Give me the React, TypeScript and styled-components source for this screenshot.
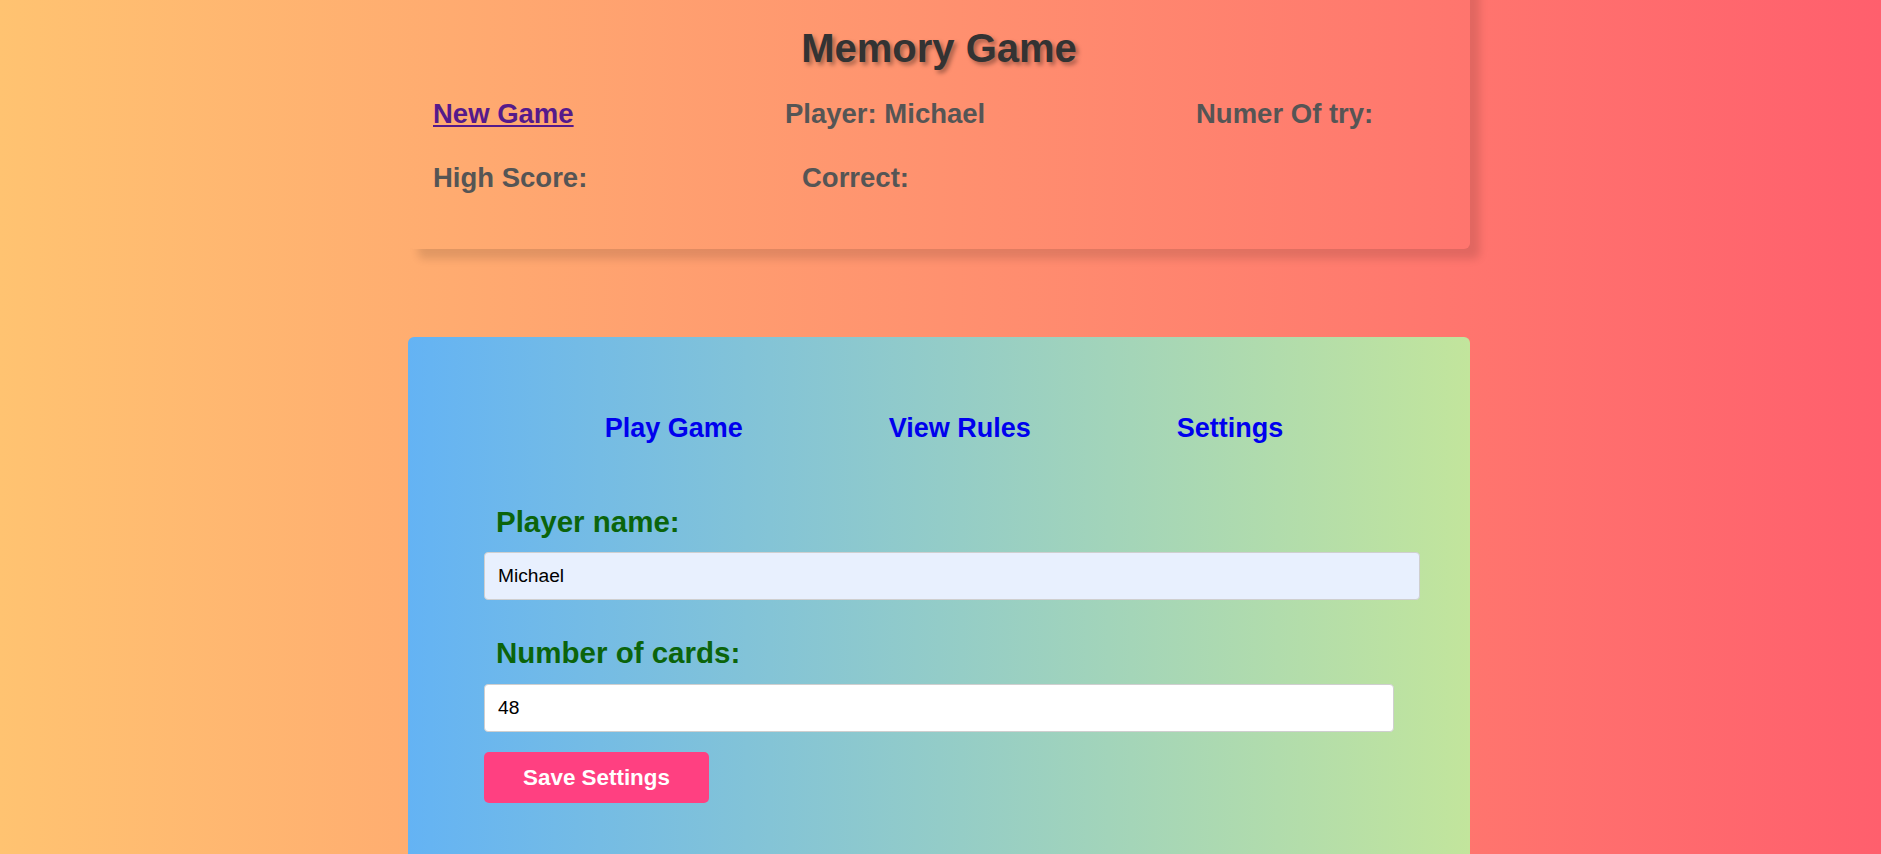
import React from "react";
import styled, { createGlobalStyle } from "styled-components";

const GlobalStyle = createGlobalStyle`
  html, body {
    margin: 0;
    padding: 0;
    min-height: 100%;
  }
  body {
    background: linear-gradient(to right, #ffc371, #ff5f6d);
    font-family: "Liberation Sans", Arial, sans-serif;
    min-height: 100vh;
    overflow-x: hidden;
  }
`;

const Page = styled.div`
  display: flex;
  flex-direction: column;
  align-items: center;
  padding: 0 3px 40px 0;
`;

const HeaderCard = styled.header`
  width: 1062px;
  box-sizing: border-box;
  margin-top: -30px;
  padding: 54px 25px 51px;
  border-radius: 6px;
  box-shadow: 10px 10px 8px rgba(0, 0, 0, 0.12);
`;

const Title = styled.h1`
  margin: 0;
  text-align: center;
  font-size: 40px;
  line-height: 48px;
  font-weight: bold;
  color: #333333;
  text-shadow: 3px 3px 4px rgba(0, 0, 0, 0.35);
`;

const StatRow = styled.div<{ $cols: string; $top: number }>`
  display: grid;
  grid-template-columns: ${(p) => p.$cols};
  margin-top: ${(p) => p.$top}px;
  font-size: 27.5px;
  line-height: 40px;
  font-weight: bold;
  color: #555555;
`;

const Stat = styled.span`
  white-space: nowrap;
`;

const NewGameLink = styled.a`
  color: #551a8b;
  text-decoration: underline;
  white-space: nowrap;
  justify-self: start;
`;

const GameCard = styled.main`
  width: 1062px;
  box-sizing: border-box;
  margin-top: 88px;
  padding: 71px 0 90px;
  border-radius: 6px;
  background: linear-gradient(to right, #64b3f4, #c2e59c);
`;

const Tabs = styled.nav`
  display: flex;
  justify-content: center;
  gap: 146px;
  padding-left: 10px;
`;

const TabLink = styled.a`
  font-size: 27px;
  line-height: 40px;
  font-weight: bold;
  color: #0000ee;
  text-decoration: none;
  cursor: pointer;
`;

const Form = styled.form`
  display: flex;
  flex-direction: column;
  align-items: flex-start;
  padding: 0 76px;
`;

const Label = styled.label<{ $top: number; $bottom: number }>`
  display: block;
  margin: ${(p) => p.$top}px 0 ${(p) => p.$bottom}px 12px;
  font-size: 29.5px;
  line-height: 40px;
  font-weight: bold;
  color: #0b640b;
`;

const TextInput = styled.input<{ $width: number; $filled?: boolean }>`
  box-sizing: border-box;
  width: ${(p) => p.$width}px;
  height: 48px;
  padding: 0 13px;
  border: 1px solid #cfcfcf;
  border-radius: 4px;
  background: ${(p) => (p.$filled ? "#e8f0fe" : "#ffffff")};
  font-family: "Liberation Sans", Arial, sans-serif;
  font-size: 19.2px;
  color: #000000;
  outline: none;
`;

const SaveButton = styled.button`
  margin-top: 20px;
  width: 225px;
  height: 51px;
  border: none;
  border-radius: 5px;
  background: #ff4081;
  color: #ffffff;
  font-family: "Liberation Sans", Arial, sans-serif;
  font-size: 22.4px;
  font-weight: bold;
  cursor: pointer;
`;

export default function App() {
  return (
    <>
      <GlobalStyle />
      <Page>
        <HeaderCard>
          <Title>Memory Game</Title>
          <StatRow $cols="352px 411px auto" $top={22}>
            <NewGameLink href="#">New Game</NewGameLink>
            <Stat>Player: Michael</Stat>
            <Stat>Numer Of try:</Stat>
          </StatRow>
          <StatRow $cols="369px auto" $top={24}>
            <Stat>High Score:</Stat>
            <Stat>Correct:</Stat>
          </StatRow>
        </HeaderCard>
        <GameCard>
          <Tabs>
            <TabLink>Play Game</TabLink>
            <TabLink>View Rules</TabLink>
            <TabLink>Settings</TabLink>
          </Tabs>
          <Form onSubmit={(e) => e.preventDefault()}>
            <Label $top={54} $bottom={10} htmlFor="player">
              Player name:
            </Label>
            <TextInput id="player" $width={936} $filled defaultValue="Michael" />
            <Label $top={33} $bottom={11} htmlFor="cards">
              Number of cards:
            </Label>
            <TextInput id="cards" $width={910} defaultValue="48" />
            <SaveButton type="submit">Save Settings</SaveButton>
          </Form>
        </GameCard>
      </Page>
    </>
  );
}
